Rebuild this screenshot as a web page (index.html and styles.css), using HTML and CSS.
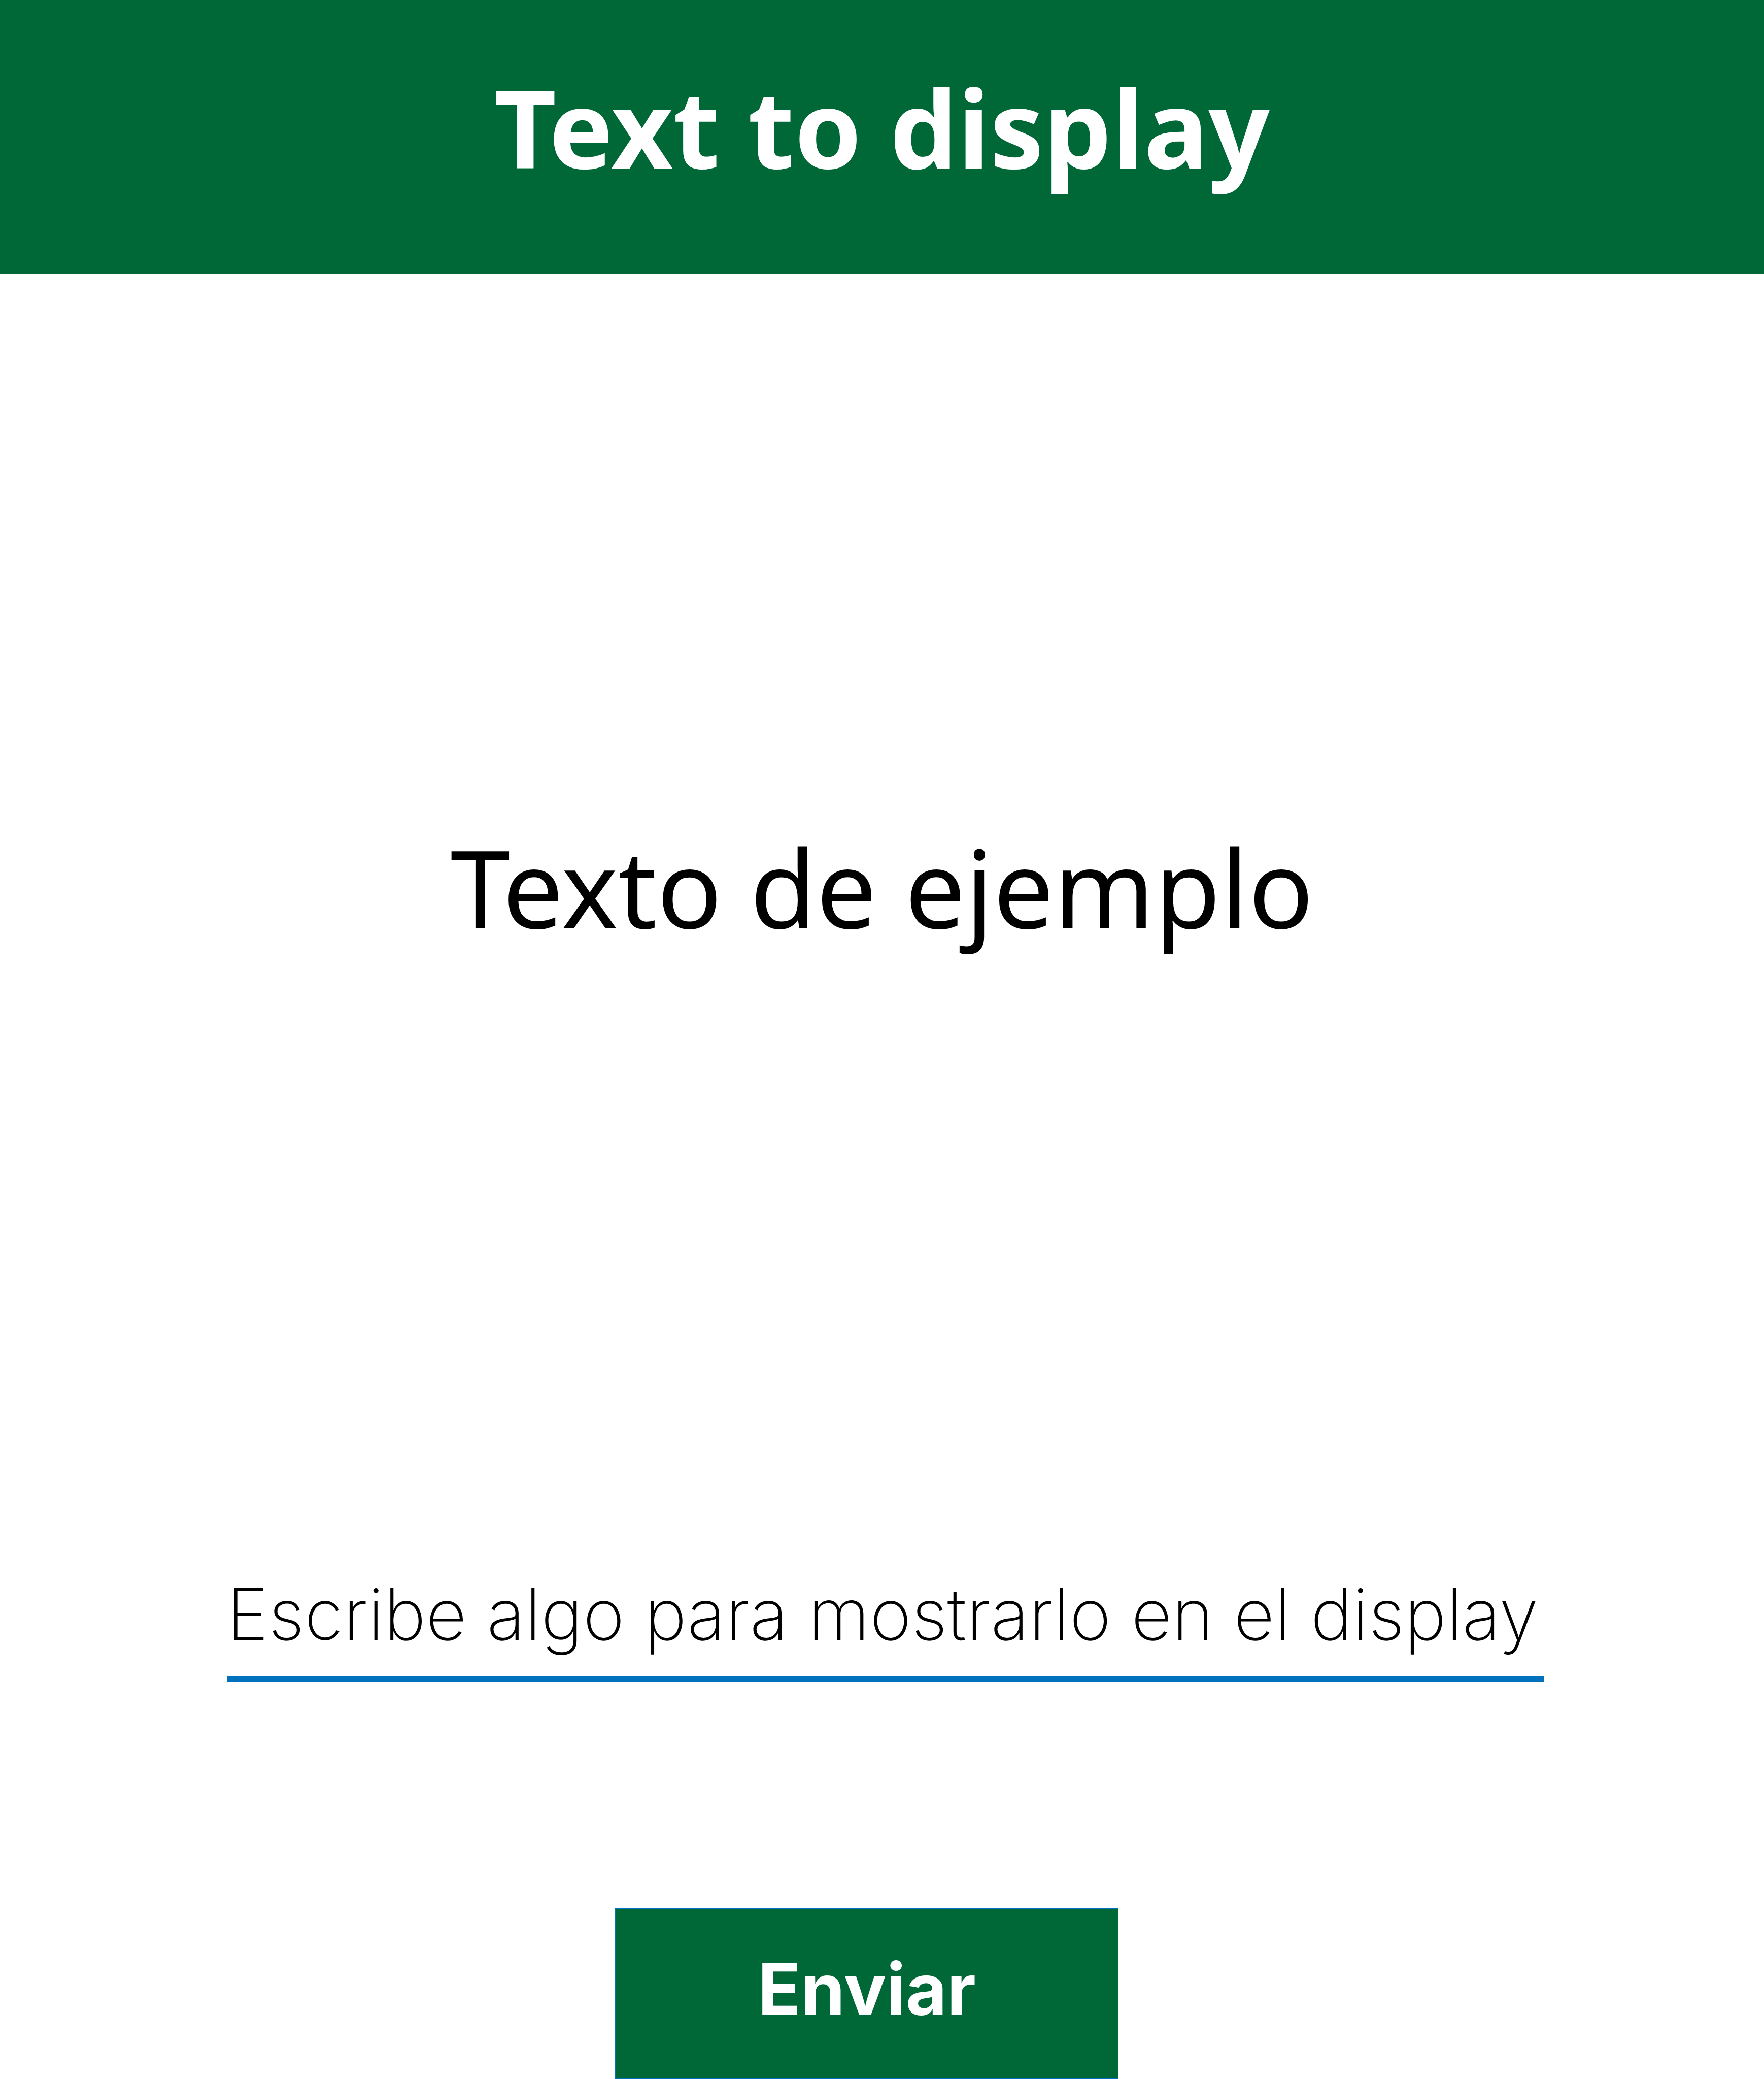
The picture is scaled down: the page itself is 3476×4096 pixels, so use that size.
FILE: index.html
```html
<!DOCTYPE html>
<html lang="es">
<head>
<meta charset="utf-8">
<title>Text to display</title>
<link rel="stylesheet" href="styles.css">
</head>
<body>
<header class="header"><h1 class="title">Text to display</h1></header>
<main class="main">
<output class="display" for="message">Texto de ejemplo</output>
<form class="form">
<input class="field" id="message" type="text" aria-label="Escribe algo para mostrarlo en el display" placeholder="Escribe algo para mostrarlo en el display">
<button class="submit" type="button">Enviar</button>
</form>
</main>
</body>
</html>
```
FILE: styles.css
```css
* { box-sizing: border-box; }
body {
  min-height: 100vh;
  margin: 0;
  display: flex;
  flex-direction: column;
  background: #fff;
  color: #000;
  font-family: "Noto Sans", "Open Sans", sans-serif;
}
.header {
  padding: 100px 32px 140px;
  background: #006837;
  color: #fff;
  text-align: center;
}
.title {
  margin: 0;
  font-size: 212px;
  font-weight: 700;
  line-height: 300px;
}
.main {
  flex: 1;
  display: flex;
  flex-direction: column;
  align-items: center;
}
.display {
  flex: 1;
  display: flex;
  align-items: center;
  padding-bottom: 140px;
  font-size: 212px;
  line-height: 300px;
}
.form {
  width: 75%;
  padding-left: 12px;
  display: flex;
  flex-direction: column;
  align-items: center;
  gap: 446px;
}
.field {
  width: 100%;
  height: 220px;
  padding: 0 0 36px;
  border: 0;
  border-bottom: 12px solid #0071bc;
  background: none;
  color: #000;
  font: 200 140px/172px Inter, sans-serif;
  outline: 0;
}
.field::placeholder { color: #000; opacity: 1; }
.submit {
  width: 992px;
  height: 336px;
  margin-right: 72px;
  padding: 0 0 20px;
  border: 1px solid #0071bc;
  background: #006837;
  color: #fff;
  font: 700 140px/172px Inter, sans-serif;
}
```
